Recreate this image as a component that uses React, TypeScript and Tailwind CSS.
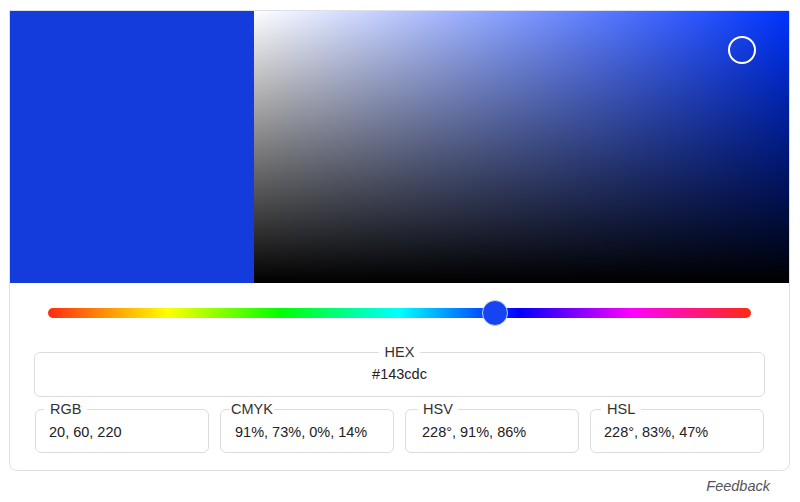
import React from 'react';

type Field = {
  label: string;
  value: string;
  legendClass: string;
  valueClass: string;
};

const fields: Field[] = [
  { label: 'RGB', value: '20, 60, 220', legendClass: 'ml-[8px] px-[6px]', valueClass: 'pl-[13px]' },
  { label: 'CMYK', value: '\u00a091%, 73%, 0%, 14%', legendClass: 'ml-[9px] px-[1px]', valueClass: 'pl-[10px]' },
  { label: 'HSV', value: '228°, 91%, 86%', legendClass: 'ml-[12px] px-[5px]', valueClass: 'pl-[16px]' },
  { label: 'HSL', value: '228°, 83%, 47%', legendClass: 'ml-[10px] px-[6px]', valueClass: 'pl-[13px]' },
];

const App: React.FC = () => {
  return (
    <div className="min-h-screen bg-white pt-[10px] pl-[9px] font-['Liberation_Sans',Arial,sans-serif] text-[14.5px] text-[#333]">
      {/* Card */}
      <div className="w-[781px] border border-[#dfe0e6] rounded-b-lg overflow-hidden">
        {/* Swatch + saturation / value area */}
        <div className="flex h-[272px]">
          <div className="w-[244px] bg-[#143cdc]" />
          <div className="relative flex-1 bg-[#0033ff]">
            <div className="absolute inset-0 bg-[linear-gradient(to_right,#ffffff_0%,rgba(255,255,255,0.55)_45%,rgba(255,255,255,0)_100%)]" />
            <div className="absolute inset-0 bg-gradient-to-b from-transparent to-black" />
            <div className="absolute left-[91.2%] top-[14.3%] w-[28px] h-[28px] -translate-x-1/2 -translate-y-1/2 rounded-full border-[2.5px] border-white" />
          </div>
        </div>

        {/* Hue slider */}
        <div className="mt-[17px] px-[38px]">
          <div className="relative h-[26px] flex items-center">
            <div className="h-[10px] w-full rounded-full bg-[linear-gradient(to_right,#ff2a10_0%,#ffff00_17%,#00ff00_33%,#00ffff_50%,#0000ff_67%,#ff00ff_83%,#ff2a10_100%)]" />
            <div className="absolute left-[63.6%] top-0 w-[26px] h-[26px] -translate-x-1/2 rounded-full bg-[#1744f2] border border-[#c9cee6]" />
          </div>
        </div>

        {/* HEX */}
        <div className="mt-[18px] px-[24px]">
          <fieldset className="border border-[#dcdde3] rounded-[6px] pt-[4px] pb-[12px]">
            <legend className="mx-auto px-[6px] leading-[16px]">HEX</legend>
            <div className="text-center leading-[20px] text-[#222]">#143cdc</div>
          </fieldset>
        </div>

        {/* Other formats */}
        <div className="mt-[4px] pl-[25px] pr-[25px] pb-[17px] grid grid-cols-4 gap-[11px]">
          {fields.map((f) => (
            <fieldset key={f.label} className="border border-[#dcdde3] rounded-[6px] pt-[5px] pb-[10px]">
              <legend className={`${f.legendClass} leading-[16px]`}>{f.label}</legend>
              <div className={`${f.valueClass} leading-[20px] text-[#222]`}>{f.value}</div>
            </fieldset>
          ))}
        </div>
      </div>

      {/* Footer */}
      <div className="w-[781px] mt-[7px] pr-[20px] text-right italic text-[#555] leading-[16px]">Feedback</div>
    </div>
  );
};

export default App;
